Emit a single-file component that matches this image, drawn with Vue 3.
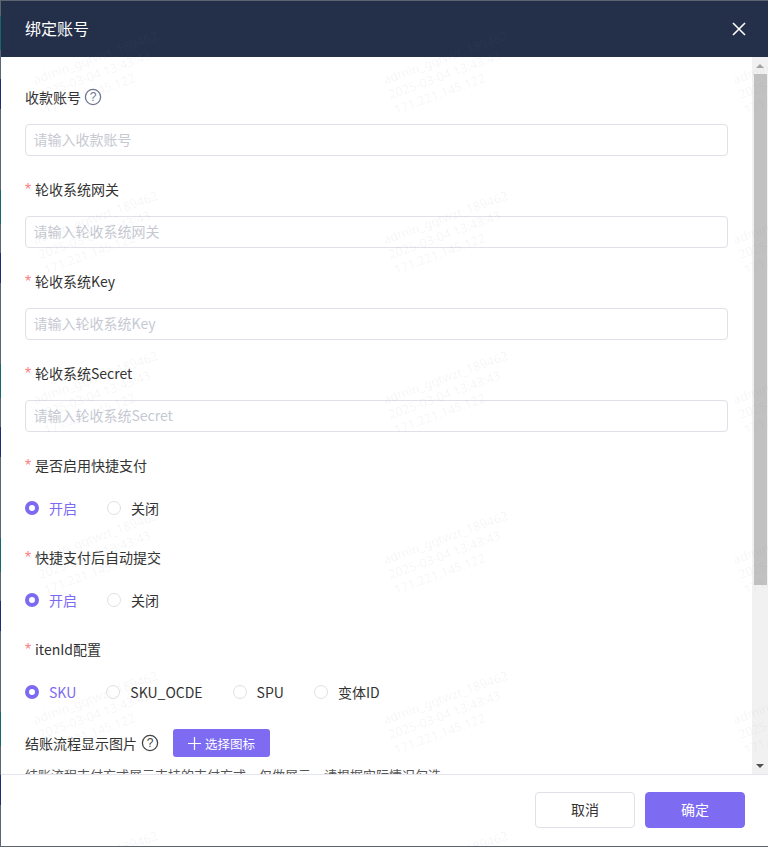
<script setup>
const fields = [
  { label: '轮收系统网关', ph: '请输入轮收系统网关' },
  { label: '轮收系统Key', ph: '请输入轮收系统Key' },
  { label: '轮收系统Secret', ph: '请输入轮收系统Secret' },
]
const radios = [
  { label: '是否启用快捷支付', opts: ['开启', '关闭'] },
  { label: '快捷支付后自动提交', opts: ['开启', '关闭'] },
  { label: 'itenId配置', opts: ['SKU', 'SKU_OCDE', 'SPU', '变体ID'] },
]
const marks = []
for (let r = 0; r < 6; r++) for (let c = 0; c < 3; c++) marks.push({ left: 31 + c * 350 + 'px', top: 73 + r * 160 + 'px' })
</script>

<template>
  <div class="page">
    <div class="dialog">
      <header class="head">
        <span class="title">绑定账号</span>
        <svg class="close" width="14" height="14" viewBox="0 0 14 14"><path d="M1 1l12 12M13 1L1 13" stroke="#fff" stroke-width="1.6" fill="none"/></svg>
      </header>
      <div class="body">
        <div class="scroll">
          <div class="field">
            <div class="label">收款账号
              <svg class="help help-a" width="18" height="18" viewBox="0 0 18 18"><circle cx="9" cy="9" r="7.6" fill="none" stroke="currentColor" stroke-width="1.3"/><text x="9" y="13.200" text-anchor="middle" font-size="12" fill="currentColor" font-family="Liberation Sans">?</text></svg>
            </div>
            <div class="input">请输入收款账号</div>
          </div>
          <div v-for="f in fields" :key="f.label" class="field">
            <div class="label"><i class="req">*</i>{{ f.label }}</div>
            <div class="input">{{ f.ph }}</div>
          </div>
          <div v-for="r in radios" :key="r.label" class="field">
            <div class="label"><i class="req">*</i>{{ r.label }}</div>
            <div class="radios">
              <span v-for="(o, i) in r.opts" :key="o" class="radio" :class="{ on: i === 0 }"><b class="dot"></b>{{ o }}</span>
            </div>
          </div>
          <div class="pic">
            <span>结账流程显示图片</span>
            <svg class="help" width="18" height="18" viewBox="0 0 18 18"><circle cx="9" cy="9" r="7.6" fill="none" stroke="currentColor" stroke-width="1.3"/><text x="9" y="13.200" text-anchor="middle" font-size="12" fill="currentColor" font-family="Liberation Sans">?</text></svg>
            <button class="pick"><svg width="13" height="13" viewBox="0 0 13 13"><path d="M6.500 0v13M0 6.500h13" stroke="#fff" stroke-width="1.200"/></svg>选择图标</button>
          </div>
          <p class="hint">结账流程支付方式展示支持的支付方式，仅做展示，请根据实际情况勾选</p>
        </div>
        <div class="bar">
          <span class="arrow up"></span>
          <div class="thumb"></div>
          <span class="arrow down"></span>
        </div>
      </div>
      <footer class="foot">
        <button class="btn">取消</button>
        <button class="btn primary">确定</button>
      </footer>
    </div>
    <div class="marks">
      <div v-for="(m, i) in marks" :key="i" class="mark" :style="m">admin_gqtwzt_189462<br>2025-03-04 13:43:43<br>171.221.145.122</div>
    </div>
  </div>
</template>

<style>
html, body { margin: 0; background: #5d6472; overflow: hidden; }
</style>

<style scoped>
.page {
  position: relative; width: 768px; height: 847px; overflow: hidden; box-sizing: border-box;
  padding: 1px 0 1px 1px; font-family: "Noto Sans CJK SC", "Noto Sans", sans-serif;
  background-color: #5d6472;
  background-image: linear-gradient(#15686e 0 34px, transparent 34px 63px, #1d2f7a 63px 93px, transparent 93px);
  background-size: 1px 174px; background-repeat: repeat-y; background-position: 0 16px;
}
.dialog { width: 767px; height: 845px; background: #fff; display: flex; flex-direction: column; }
.head { height: 56px; flex: none; background: #24304a; display: flex; align-items: center; justify-content: space-between; padding: 0 22px 0 24px; color: #fff; font-size: 16px; }
.title { padding-bottom: 2px; }
.body { height: 717px; flex: none; display: flex; }
.scroll { flex: 1; overflow: hidden; padding: 28px 24px 0 24px; color: #333; font-size: 14px; }
.field { height: 92px; }
.label { height: 25px; line-height: 25px; display: flex; align-items: center; }
.req { color: #f98080; font-style: normal; width: 10px; font: 16px/25px "Liberation Sans", sans-serif; }
.help { margin-left: 4px; color: #444; }
.help-a { margin-left: 3px; margin-top: -2px; color: #6e7690; }
.input { margin-top: 14px; height: 30px; line-height: 28px; border: 1px solid #dfe0e8; border-radius: 4px; padding: 0 8px 0 7.5px; color: #c6c9d2; }
.radios { margin-top: 18px; display: flex; gap: 30px; height: 24px; align-items: center; }
.radio { display: flex; align-items: center; gap: 10px; }
.radio.on { color: #7c6bf2; }
.dot { width: 12px; height: 12px; border: 1px solid #dfe0e8; border-radius: 50%; background: #fff; box-sizing: content-box; }
.radio.on .dot { width: 6px; height: 6px; border: 4px solid #7c6bf2; }
.pic { display: flex; align-items: center; height: 28px; }
.pick { margin-left: 14px; width: 97px; height: 28px; border: 0; border-radius: 3px; background: #7d6bf2; color: #fff; font: 12.5px "Noto Sans CJK SC", sans-serif; display: flex; align-items: center; justify-content: center; gap: 4px; padding: 0; }
.hint { margin: 8px 0 0; font-size: 13px; color: #555; white-space: nowrap; }
.bar { width: 16px; flex: none; background: #f1f1f1; position: relative; }
.thumb { width: 13px; height: 511px; background: #c1c1c1; position: absolute; top: 17px; left: 2px; }
.arrow { position: absolute; left: 4px; border-left: 4px solid transparent; border-right: 4px solid transparent; }
.arrow.up { top: 7px; border-bottom: 4px solid #a3a3a3; }
.arrow.down { bottom: 6px; border-top: 4px solid #505050; }
.foot { flex: 1; border-top: 1px solid #e4e5ee; display: flex; justify-content: flex-end; align-items: flex-start; gap: 10px; padding: 17px 23px 0 0; }
.btn { width: 100px; height: 36px; border: 1px solid #dfe0e8; border-radius: 4px; background: #fff; color: #333; font: 14px "Noto Sans CJK SC", sans-serif; padding: 0 0 2px; }
.btn.primary { border-color: #7d6bf2; background: #7d6bf2; color: #fff; }
.marks { position: absolute; inset: 0; pointer-events: none; }
.mark { position: absolute; transform: rotate(-20deg); transform-origin: 0 0; color: rgba(110,115,130,.08); font: 12.5px/16px "Noto Sans", sans-serif; white-space: nowrap; }
</style>
